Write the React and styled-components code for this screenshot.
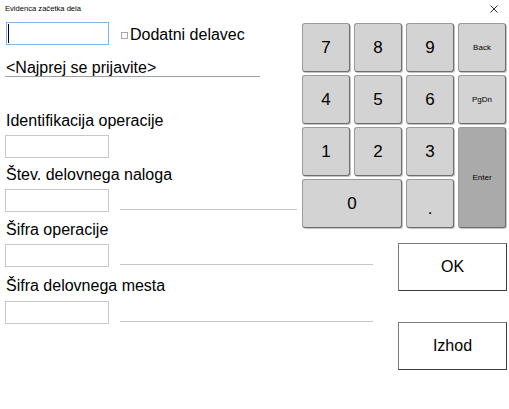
import styled, { createGlobalStyle } from "styled-components";

const GlobalStyle = createGlobalStyle`
  html, body {
    margin: 0;
    padding: 0;
    background: #ffffff;
  }
  body {
    font-family: "Liberation Sans", Arial, sans-serif;
    color: #000;
  }
`;

const Window = styled.div`
  width: 509px;
  height: 409px;
  background: #fff;
  overflow: hidden;
`;

const TitleBar = styled.div`
  height: 17px;
  display: flex;
  align-items: center;
  justify-content: space-between;
  padding: 0 11px 0 5px;
`;

const TitleText = styled.span`
  font-size: 7.6px;
  color: #000;
`;

const CloseIcon = styled.svg`
  width: 8px;
  height: 8px;
`;

const Section = styled.div`
  display: flex;
  align-items: flex-start;
`;

const FormCol = styled.div`
  width: ${(p) => p.width}px;
  display: flex;
  flex-direction: column;
  padding-left: 5px;
  box-sizing: border-box;
`;

const TopRow = styled.div`
  display: flex;
  align-items: center;
  margin-top: 5px;
  margin-left: 1px;
`;

const FocusInput = styled.div`
  width: 103px;
  height: 23px;
  box-sizing: border-box;
  border: 1px solid #7eb4ea;
  display: flex;
  align-items: center;
  padding-left: 1px;
`;

const Caret = styled.div`
  width: 1px;
  height: 19px;
  background: #000;
`;

const CheckWrap = styled.label`
  display: flex;
  align-items: center;
  margin-left: 12px;
  font-size: 16px;
  margin-top: 2px;
`;

const CheckBox = styled.span`
  width: 7px;
  height: 7px;
  box-sizing: border-box;
  border: 1px solid #a8a8a8;
  margin-right: 2px;
  margin-top: 1px;
`;

const UserLabel = styled.div`
  font-size: 16px;
  width: 254px;
  margin-top: 14px;
  padding-left: 1px;
  border-bottom: 1px solid #a0a0a0;
  line-height: 17px;
`;

const FieldLabel = styled.div`
  font-size: 16px;
  line-height: 18px;
  margin-top: ${(p) => p.gap ?? 0}px;
  padding-left: 1px;
`;

const FieldRow = styled.div`
  display: flex;
  align-items: flex-end;
  margin-top: ${(p) => p.gap ?? 0}px;
`;

const Box = styled.div`
  width: 104px;
  height: 23px;
  box-sizing: border-box;
  border: 1px solid #c8c8c8;
  flex-shrink: 0;
`;

const Rule = styled.div`
  width: ${(p) => p.width}px;
  height: 0;
  border-bottom: 1px solid #c6c6c6;
  margin-left: 11px;
  margin-bottom: 2px;
`;

const Keypad = styled.div`
  display: grid;
  grid-template-columns: repeat(4, 48px);
  grid-template-rows: repeat(4, 49px);
  gap: 3px 4px;
  margin-left: 5px;
  margin-top: 6px;
`;

const Key = styled.button`
  grid-column: ${(p) => p.col ?? "auto"};
  grid-row: ${(p) => p.row ?? "auto"};
  background: ${(p) => (p.dark ? "#aaaaaa" : "#d3d3d3")};
  border: 1px solid #9a9a9a;
  border-right-color: #6e6e6e;
  border-bottom-color: #6e6e6e;
  border-radius: 3px;
  box-shadow: 1px 1px 0 #c4c4c4;
  font-family: "Liberation Sans", Arial, sans-serif;
  font-size: ${(p) => (p.small ? "8px" : "17px")};
  color: #000;
  padding: 0;
  display: flex;
  align-items: center;
  justify-content: center;
  padding-top: ${(p) => (p.dot ? "10px" : "0")};
`;

const ActionCol = styled.div`
  display: flex;
  flex-direction: column;
  gap: 31px;
  margin-left: 25px;
  margin-top: 4px;
`;

const ActionButton = styled.button`
  width: 109px;
  height: 48px;
  background: #fff;
  border: 1px solid #7a7a7a;
  border-right-color: #3c3c3c;
  border-bottom-color: #3c3c3c;
  font-family: "Liberation Sans", Arial, sans-serif;
  font-size: 16px;
  color: #000;
  padding: 0;
`;

const keys = [
  { label: "7" },
  { label: "8" },
  { label: "9" },
  { label: "Back", small: true },
  { label: "4" },
  { label: "5" },
  { label: "6" },
  { label: "PgDn", small: true },
  { label: "1" },
  { label: "2" },
  { label: "3" },
  { label: "Enter", small: true, dark: true, col: "4", row: "3 / span 2" },
  { label: "0", col: "1 / span 2" },
  { label: ".", dot: true },
];

export default function App() {
  return (
    <Window>
      <GlobalStyle />
      <TitleBar>
        <TitleText>Evidenca začetka dela</TitleText>
        <CloseIcon viewBox="0 0 8 8">
          <path d="M0.5 0.5 L7.5 7.5 M7.5 0.5 L0.5 7.5" stroke="#333" strokeWidth="1" />
        </CloseIcon>
      </TitleBar>

      <Section>
        <FormCol width={297}>
          <TopRow>
            <FocusInput>
              <Caret />
            </FocusInput>
            <CheckWrap>
              <CheckBox />
              Dodatni delavec
            </CheckWrap>
          </TopRow>
          <UserLabel>&lt;Najprej se prijavite&gt;</UserLabel>
          <FieldLabel gap={35}>Identifikacija operacije</FieldLabel>
          <FieldRow gap={5}>
            <Box />
          </FieldRow>
          <FieldLabel gap={8}>Štev. delovnega naloga</FieldLabel>
          <FieldRow gap={5}>
            <Box />
            <Rule width={177} />
          </FieldRow>
          <FieldLabel gap={9}>Šifra operacije</FieldLabel>
        </FormCol>
        <Keypad>
          {keys.map((k) => (
            <Key key={k.label} {...k}>
              {k.label}
            </Key>
          ))}
        </Keypad>
      </Section>

      <Section>
        <FormCol width={373}>
          <FieldRow gap={5}>
            <Box />
            <Rule width={253} />
          </FieldRow>
          <FieldLabel gap={10}>Šifra delovnega mesta</FieldLabel>
          <FieldRow gap={6}>
            <Box />
            <Rule width={253} />
          </FieldRow>
        </FormCol>
        <ActionCol>
          <ActionButton>OK</ActionButton>
          <ActionButton>Izhod</ActionButton>
        </ActionCol>
      </Section>
    </Window>
  );
}
